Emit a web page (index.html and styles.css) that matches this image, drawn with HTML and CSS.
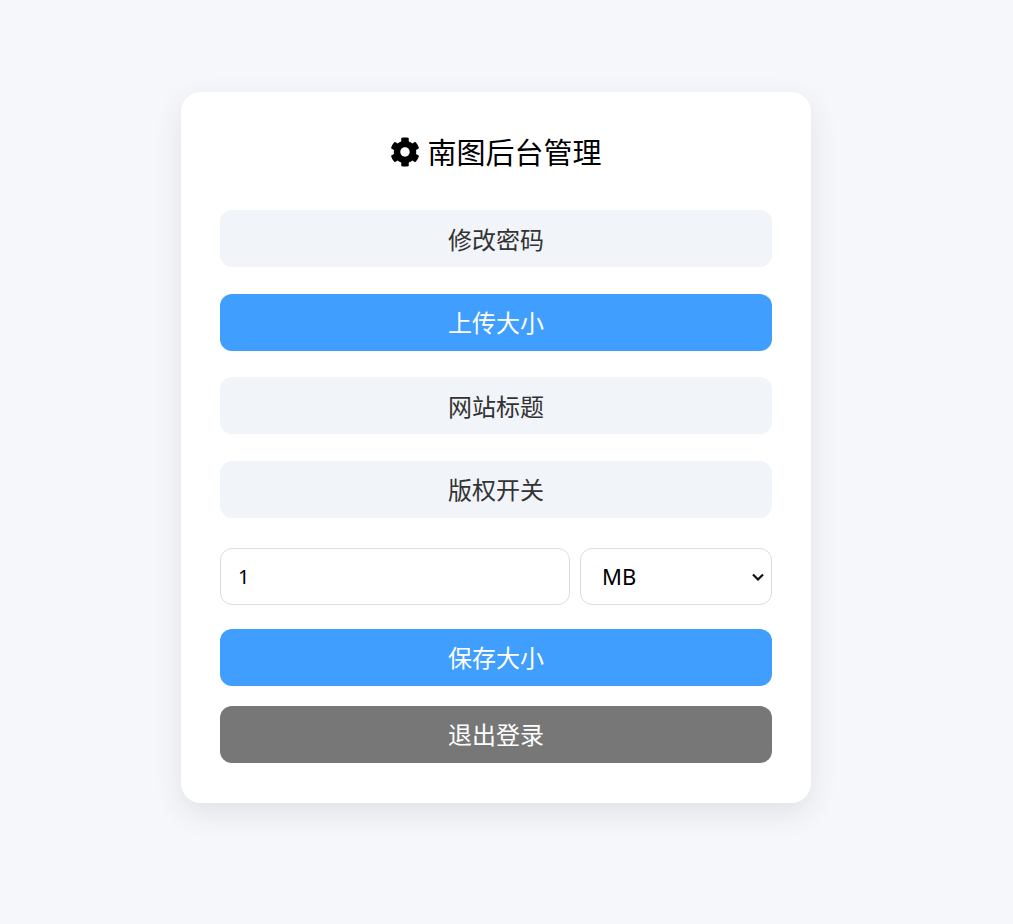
FILE: index.html
```html
<!DOCTYPE html>
<html lang="zh-CN">
<head>
<meta charset="utf-8">
<title>南图后台管理</title>
<link rel="stylesheet" href="styles.css">
</head>
<body>
<main class="card">
  <h1 class="title">
    <svg class="gear" viewBox="0 0 512 512" aria-hidden="true"><path d="M487.4 315.7l-42.6-24.6c4.3-23.2 4.3-47 0-70.2l42.6-24.6c4.9-2.8 7.1-8.6 5.5-14-11.1-35.6-30-67.8-54.7-94.6-3.8-4.1-10-5.1-14.8-2.3L380.8 110c-17.9-15.4-38.5-27.3-60.8-35.1V25.8c0-5.6-3.9-10.5-9.4-11.7-36.7-8.2-74.3-7.8-109.2 0-5.5 1.2-9.4 6.1-9.4 11.7V75c-22.2 7.9-42.8 19.8-60.8 35.1L88.7 85.5c-4.9-2.8-11-1.9-14.8 2.3-24.7 26.7-43.6 58.9-54.7 94.6-1.7 5.4.6 11.2 5.5 14L67.3 221c-4.3 23.2-4.3 47 0 70.2l-42.6 24.6c-4.9 2.8-7.1 8.6-5.5 14 11.1 35.6 30 67.8 54.7 94.6 3.8 4.1 10 5.1 14.8 2.3l42.6-24.6c17.9 15.4 38.5 27.3 60.8 35.1v49.2c0 5.6 3.9 10.5 9.4 11.7 36.7 8.2 74.3 7.8 109.2 0 5.5-1.2 9.4-6.1 9.4-11.7v-49.2c22.2-7.9 42.8-19.8 60.8-35.1l42.6 24.6c4.9 2.8 11 1.9 14.8-2.3 24.7-26.7 43.6-58.9 54.7-94.6 1.5-5.5-.7-11.3-5.6-14.1zM256 336c-44.1 0-80-35.9-80-80s35.9-80 80-80 80 35.9 80 80-35.9 80-80 80z"/></svg>
    <span>南图后台管理</span>
  </h1>
  <nav class="tabs">
    <button class="btn tab">修改密码</button>
    <button class="btn primary">上传大小</button>
    <button class="btn tab">网站标题</button>
    <button class="btn tab">版权开关</button>
  </nav>
  <div class="size-row">
    <input class="field size-input" type="text" value="1">
    <div class="unit-wrap">
      <select class="field size-unit">
        <option>MB</option>
        <option>KB</option>
      </select>
      <svg class="chevron" viewBox="0 0 12 8" aria-hidden="true"><path d="M1 1.5l5 5 5-5"/></svg>
    </div>
  </div>
  <button class="btn primary save">保存大小</button>
  <button class="btn logout">退出登录</button>
</main>
</body>
</html>
```
FILE: styles.css
```css
* { box-sizing: border-box; }
html, body { margin: 0; height: 100%; }
body {
  background: #f5f7fb;
  font-family: "Noto Sans CJK SC", "Noto Sans", sans-serif;
  padding: 92px 202px 0 181px;
}
.card {
  width: 630px;
  height: 711px;
  background: #fff;
  border-radius: 20px;
  padding: 39px;
  box-shadow: 0 10px 30px rgba(0, 0, 0, 0.09);
  display: flex;
  flex-direction: column;
}
.title {
  margin: 0 0 39px;
  height: 40px;
  display: flex;
  align-items: center;
  justify-content: center;
  gap: 7px;
  font-size: 29px;
  font-weight: 400;
  color: #000;
}
.gear { width: 30px; height: 30px; fill: #000; margin-top: 2px; }
.tabs { display: flex; flex-direction: column; gap: 26.67px; }
.btn {
  display: block;
  width: 100%;
  height: 57px;
  border: 0;
  border-radius: 12px;
  padding: 0 0 1px;
  font-family: inherit;
  font-size: 24px;
  font-weight: 400;
}
.tab { background: #f1f4f8; color: #333; }
.primary { background: #409eff; color: #fff; }
.logout { background: #777; color: #fff; margin-top: 20px; }
.save { margin-top: 24px; }
.size-row { display: flex; gap: 10px; margin-top: 30px; }
.field {
  height: 57px;
  border: 1px solid #ddd;
  border-radius: 12px;
  background: #fff;
  font-family: "Noto Sans", "Noto Sans CJK SC", sans-serif;
  color: #000;
}
.size-input { width: 350px; padding: 0 17px; font-size: 20px; outline: 0; }
.unit-wrap { position: relative; width: 192px; }
.size-unit { width: 100%; padding: 0 21px; font-size: 22px; appearance: none; }
.chevron {
  position: absolute;
  right: 8px;
  top: 25px;
  width: 12px;
  height: 8px;
  fill: none;
  stroke: #111;
  stroke-width: 2.2;
  pointer-events: none;
}
```
